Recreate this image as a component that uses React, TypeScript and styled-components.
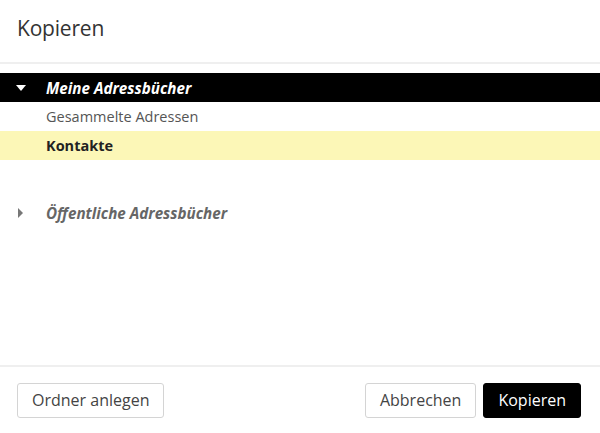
import React from "react";
import styled, { createGlobalStyle } from "styled-components";

const GlobalStyle = createGlobalStyle`
    html, body {
        margin: 0;
        padding: 0;
        background: #fff;
    }
    body {
        font-family: "Open Sans", "Noto Sans", "DejaVu Sans", sans-serif;
        color: #333;
    }
`

const Dialog = styled.div`
    width: 600px;
    height: 433px;
    display: flex;
    flex-direction: column;
    background: #fff;
    box-sizing: border-box;
`

const Header = styled.div`
    height: 64px;
    box-sizing: border-box;
    padding: 0 17px;
    display: flex;
    align-items: center;
    border-bottom: 2px solid #efefef;
`

const Title = styled.h1`
    margin: 0 0 6px;
    font-size: 21px;
    font-weight: 400;
    color: #333;
    letter-spacing: -0.2px;
`

const Body = styled.div`
    flex: 1;
    padding-top: 9px;
`

const Group = styled.ul`
    list-style: none;
    margin: 0 0 38px;
    padding: 0;
`

const GroupRow = styled.div<{ $open?: boolean }>`
    display: flex;
    align-items: center;
    height: 29px;
    background: ${(p) => (p.$open ? "#000" : "transparent")};
    color: ${(p) => (p.$open ? "#fff" : "#666")};
    font-size: 15.2px;
    font-weight: 700;
    font-style: italic;
`

const Toggle = styled.span`
    width: 46px;
    display: flex;
    align-items: center;
    padding-left: 16px;
    box-sizing: border-box;
`

const Item = styled.li<{ $selected?: boolean }>`
    height: 29px;
    display: flex;
    align-items: center;
    padding-left: 46px;
    font-size: 14.5px;
    background: ${(p) => (p.$selected ? "#fcf7b7" : "transparent")};
    color: ${(p) => (p.$selected ? "#222" : "#555")};
    font-weight: ${(p) => (p.$selected ? 700 : 400)};
`

const Footer = styled.div`
    height: 68px;
    box-sizing: border-box;
    border-top: 2px solid #efefef;
    display: flex;
    align-items: center;
    padding: 0 19px 0 17px;
    gap: 7px;
`

const Spacer = styled.div`
    flex: 1;
`

const Button = styled.button<{ $primary?: boolean }>`
    height: 35px;
    padding: 0 14px;
    font-family: inherit;
    font-size: 16px;
    border-radius: 3px;
    border: 1px solid ${(p) => (p.$primary ? "#000" : "#d4d4d4")};
    background: ${(p) => (p.$primary ? "#000" : "#fff")};
    color: ${(p) => (p.$primary ? "#fff" : "#444")};
    cursor: pointer;
`

const Caret = ({ open, color }: { open: boolean; color: string }) => (
    <svg width="10" height="10" viewBox="0 0 10 10">
        {open
            ? <polygon points="0,2 10,2 5,8" fill={color} />
            : <polygon points="2,0 7,5 2,10" fill={color} />}
    </svg>
)

const App: React.FC = () => {
    return (
        <>
            <GlobalStyle />
            <Dialog>
                <Header>
                    <Title>Kopieren</Title>
                </Header>
                <Body>
                    <Group>
                        <GroupRow $open>
                            <Toggle><Caret open color="#fff" /></Toggle>
                            Meine Adressbücher
                        </GroupRow>
                        <Item>Gesammelte Adressen</Item>
                        <Item $selected>Kontakte</Item>
                    </Group>
                    <Group>
                        <GroupRow>
                            <Toggle><Caret open={false} color="#777" /></Toggle>
                            Öffentliche Adressbücher
                        </GroupRow>
                    </Group>
                </Body>
                <Footer>
                    <Button>Ordner anlegen</Button>
                    <Spacer />
                    <Button>Abbrechen</Button>
                    <Button $primary>Kopieren</Button>
                </Footer>
            </Dialog>
        </>
    )
}

export default App
